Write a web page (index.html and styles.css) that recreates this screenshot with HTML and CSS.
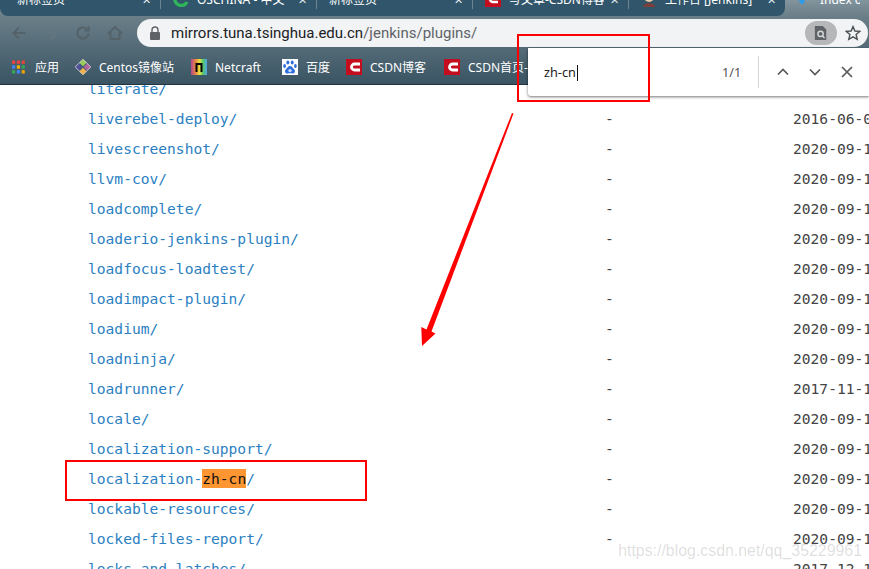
FILE: index.html
```html
<!DOCTYPE html>
<html lang="en">

<head>
    <meta charset="UTF-8">
    <title>Index of /jenkins/plugins/</title>
    <link rel="stylesheet" href="styles.css">
</head>

<body>
    <div id="page">
        <header id="chrome">
            <div id="tabs">
                <div id="tabsOff">
                    <div class="tab"><span class="tabTitle">新标签页</span><span class="tabClose">✕</span></div>
                    <div class="tab">
                        <svg class="tabIcon" viewBox="0 0 16 16"><path d="M14 5 A6.5 6.5 0 1 0 14 11" fill="none" stroke="#2fb45a" stroke-width="3.4"/></svg>
                        <span class="tabTitle">OSCHINA - 中文</span><span class="tabClose">✕</span>
                    </div>
                    <div class="tab"><span class="tabTitle">新标签页</span><span class="tabClose">✕</span></div>
                    <div class="tab">
                        <svg class="tabIcon" viewBox="0 0 16 16"><rect width="16" height="16" fill="#c40d1e"/><path d="M13 5 H8 A3 3 0 0 0 8 11 H13" fill="none" stroke="#fff" stroke-width="2.6"/></svg>
                        <span class="tabTitle">写文章-CSDN博客</span><span class="tabClose">✕</span>
                    </div>
                    <div class="tab lastOff">
                        <svg class="tabIcon" viewBox="0 0 16 16"><circle cx="8" cy="6" r="5" fill="#e8c9a8"/><path d="M2 16 C2 11 14 11 14 16 Z" fill="#7c3f3a"/><rect x="4" y="2" width="8" height="2" fill="#5a4a44"/></svg>
                        <span class="tabTitle">工作台 [Jenkins]</span><span class="tabClose">✕</span>
                    </div>
                </div>
                <div class="tab activeTab">
                    <svg class="tabIcon" viewBox="0 0 16 16"><path d="M8 14 L5 10 L8 4 L11 10 Z" fill="#2d9be8"/></svg>
                    <span class="tabTitle">Index of</span>
                </div>
            </div>

            <div id="toolbar">
                <div id="navBtns">
                    <svg viewBox="0 0 16 16"><path d="M14.5 8 H2.5 M8 2.5 L2.5 8 L8 13.5" /></svg>
                    <svg class="navOff" viewBox="0 0 16 16"><path d="M1.5 8 H13.5 M8 2.5 L13.5 8 L8 13.5" /></svg>
                    <svg viewBox="0 0 16 16"><path d="M13.5 8 A5.6 5.6 0 1 1 11.8 4 M13.6 1.5 V5.4 H9.7" /></svg>
                    <svg viewBox="0 0 16 16"><path d="M1 8.5 L8 2 L15 8.5 M3.5 7 V14 H12.5 V7" /></svg>
                </div>
                <div id="omnibox">
                    <svg id="lock" viewBox="0 0 12 14"><path d="M3 6 V4 A3 3 0 0 1 9 4 V6" fill="none" stroke="#5f6368" stroke-width="1.4"/><rect x="1" y="6" width="10" height="8" rx="1" fill="#5f6368"/></svg>
                    <span id="url"><b>mirrors.tuna.tsinghua.edu.cn</b>/jenkins/plugins/</span>
                    <span id="lens">
                        <svg viewBox="0 0 16 18"><path d="M1 1 H10 L14 5 V17 H1 Z" fill="#5f6368"/><circle cx="7.5" cy="10" r="3" fill="none" stroke="#d8d9da" stroke-width="1.6"/><path d="M9.6 12.2 L12 14.6" stroke="#d8d9da" stroke-width="1.6"/></svg>
                    </span>
                    <svg id="star" viewBox="0 0 16 16"><path d="M8 1.6 L9.9 6 L14.7 6.4 L11.1 9.6 L12.2 14.3 L8 11.8 L3.8 14.3 L4.9 9.6 L1.3 6.4 L6.1 6 Z" fill="none" stroke="#4a4f53" stroke-width="1.4"/></svg>
                </div>
            </div>

            <div id="bookmarks">
                <div class="mark markApps">
                    <svg class="markIcon" viewBox="0 0 14 14">
                        <rect x="0" y="0" width="3.4" height="3.6" fill="#e8453c"/><rect x="5.2" y="0" width="3.4" height="3.6" fill="#e8453c"/><rect x="10.4" y="0" width="3.4" height="3.6" fill="#e8453c"/>
                        <rect x="0" y="5.2" width="3.4" height="3.6" fill="#4285f4"/><rect x="5.2" y="5.2" width="3.4" height="3.6" fill="#f4b400"/><rect x="10.4" y="5.2" width="3.4" height="3.6" fill="#34a853"/>
                        <rect x="0" y="10.4" width="3.4" height="3.6" fill="#34a853"/><rect x="5.2" y="10.4" width="3.4" height="3.6" fill="#4285f4"/><rect x="10.4" y="10.4" width="3.4" height="3.6" fill="#f4a400"/>
                    </svg>
                    <span>应用</span>
                </div>
                <div class="mark markCentos">
                    <svg class="markIcon" viewBox="0 0 16 16">
                        <g transform="rotate(45 8 8)">
                            <rect x="2.5" y="2.5" width="5" height="5" fill="#9ccd5a"/><rect x="8.5" y="2.5" width="5" height="5" fill="#b4679f"/>
                            <rect x="2.5" y="8.5" width="5" height="5" fill="#4f4f99"/><rect x="8.5" y="8.5" width="5" height="5" fill="#f2b14d"/>
                            <rect x="2.5" y="2.5" width="11" height="11" fill="none" stroke="#d8d8d8" stroke-width=".8"/>
                        </g>
                    </svg>
                    <span>Centos镜像站</span>
                </div>
                <div class="mark markNetcraft">
                    <svg class="markIcon" viewBox="0 0 16 16">
                        <defs>
                            <linearGradient id="rainbow" x1="0" y1="0" x2="1" y2="0">
                                <stop offset="0" stop-color="#b8478f"/><stop offset=".3" stop-color="#e8893a"/><stop offset=".55" stop-color="#e7e343"/><stop offset=".75" stop-color="#55c76a"/><stop offset="1" stop-color="#4aa6e8"/>
                            </linearGradient>
                        </defs>
                        <rect width="16" height="16" fill="url(#rainbow)"/>
                        <path d="M4.5 13 V4 H11.5 V13 H9.5 V6 H6.5 V13 Z" fill="#000"/>
                    </svg>
                    <span>Netcraft</span>
                </div>
                <div class="mark markBaidu">
                    <svg class="markIcon" viewBox="0 0 16 16">
                        <rect width="16" height="16" fill="#fff"/>
                        <g fill="#2f6fdc">
                            <ellipse cx="5.8" cy="3.6" rx="1.5" ry="2"/><ellipse cx="10.2" cy="3.6" rx="1.5" ry="2"/>
                            <ellipse cx="2.6" cy="7" rx="1.4" ry="1.9"/><ellipse cx="13.4" cy="7" rx="1.4" ry="1.9"/>
                            <path d="M8 7 C5.8 7 5.4 9 3.8 10.4 C2.2 12 3.2 14.6 5.6 14.4 C7 14.3 9 14.3 10.4 14.4 C12.8 14.6 13.8 12 12.2 10.4 C10.6 9 10.2 7 8 7 Z"/>
                        </g>
                        <circle cx="8" cy="11.6" r="1.7" fill="#cfe0fa"/>
                    </svg>
                    <span>百度</span>
                </div>
                <div class="mark markCsdn">
                    <svg class="markIcon" viewBox="0 0 16 16"><rect width="16" height="16" fill="#c40d1e"/><path d="M14 5 H8.5 A3 3 0 0 0 8.5 11 H14" fill="none" stroke="#fff" stroke-width="2.8"/></svg>
                    <span>CSDN博客</span>
                </div>
                <div class="mark">
                    <svg class="markIcon" viewBox="0 0 16 16"><rect width="16" height="16" fill="#c40d1e"/><path d="M14 5 H8.5 A3 3 0 0 0 8.5 11 H14" fill="none" stroke="#fff" stroke-width="2.8"/></svg>
                    <span>CSDN首页-</span>
                </div>
            </div>
        </header>

        <main id="listing">
            <div class="row"><a>literate/</a><span>-</span><span>2016-06-08 01:12</span></div>
            <div class="row"><a>liverebel-deploy/</a><span>-</span><span>2016-06-08 01:12</span></div>
            <div class="row"><a>livescreenshot/</a><span>-</span><span>2020-09-14 05:20</span></div>
            <div class="row"><a>llvm-cov/</a><span>-</span><span>2020-09-14 05:20</span></div>
            <div class="row"><a>loadcomplete/</a><span>-</span><span>2020-09-14 05:20</span></div>
            <div class="row"><a>loaderio-jenkins-plugin/</a><span>-</span><span>2020-09-14 05:20</span></div>
            <div class="row"><a>loadfocus-loadtest/</a><span>-</span><span>2020-09-14 05:20</span></div>
            <div class="row"><a>loadimpact-plugin/</a><span>-</span><span>2020-09-14 05:20</span></div>
            <div class="row"><a>loadium/</a><span>-</span><span>2020-09-14 05:20</span></div>
            <div class="row"><a>loadninja/</a><span>-</span><span>2020-09-14 05:20</span></div>
            <div class="row"><a>loadrunner/</a><span>-</span><span>2017-11-14 05:20</span></div>
            <div class="row"><a>locale/</a><span>-</span><span>2020-09-14 05:20</span></div>
            <div class="row"><a>localization-support/</a><span>-</span><span>2020-09-14 05:20</span></div>
            <div class="row"><a>localization-<mark class="hit">zh-cn</mark>/</a><span>-</span><span>2020-09-14 05:20</span></div>
            <div class="row"><a>lockable-resources/</a><span>-</span><span>2020-09-14 05:20</span></div>
            <div class="row"><a>locked-files-report/</a><span>-</span><span>2020-09-14 05:20</span></div>
            <div class="row"><a>locks-and-latches/</a><span>-</span><span>2017-12-14 05:20</span></div>
        </main>

        <!-- find bar and the annotations drawn on top of the shot -->
        <div id="findBar">
            <span id="findText">zh-cn</span>
            <span id="findCount">1/1</span>
            <span id="findSep"></span>
            <svg class="findBtn" viewBox="0 0 14 14"><path d="M2 9.5 L7 4.5 L12 9.5"/></svg>
            <svg class="findBtn" viewBox="0 0 14 14"><path d="M2 4.5 L7 9.5 L12 4.5"/></svg>
            <svg class="findBtn" viewBox="0 0 14 14"><path d="M2 2 L12 12 M12 2 L2 12"/></svg>
        </div>
        <div class="redBox" id="boxFind"></div>
        <div class="redBox" id="boxRow"></div>
        <svg id="arrow" viewBox="0 0 869 569"><polygon points="512,113 513.5,113.6 431.5,331.5 435.5,333.5 422,346 421.3,327 426.5,329.5"/></svg>
        <div id="watermark">https://blog.csdn.net/qq_35229961</div>
    </div>
</body>

</html>
```

FILE: styles.css
```css
html, body {
    margin: 0;
    padding: 0;
    background-color: white;
}

#page {
    position: relative;
    width: 869px;
    height: 569px;
    overflow: hidden;
}

#chrome {
    position: relative;
    z-index: 1;
    height: 84px;
    background: linear-gradient(#82949c, #6a7e88 20%, #3a5463);
    border-bottom: 1px solid #22343e;
    font-family: "Noto Sans", "Noto Sans CJK SC", sans-serif;
    color: white;
}

/* tabs are cut off at the top of the shot */
#tabs {
    display: flex;
    height: 16px;
}

#tabsOff {
    display: flex;
    align-items: flex-start;
    height: 16px;
    padding-left: 5px;
    background-color: #31566b;
    border-radius: 0 0 8px 8px;
}

.tab {
    flex: none;
    display: flex;
    align-items: center;
    box-sizing: border-box;
    width: 156px;
    height: 19px;
    margin-top: -10px;
    padding: 0 9px 0 12px;
    font-size: 12px;
    line-height: 12px;
    border-right: 1px solid #6d8492;
    overflow: hidden;
}

.tab.lastOff {
    border-right: none;
}

.activeTab {
    padding-left: 9px;
    border-right: none;
    width: 84px;
}

.tabIcon {
    flex: none;
    width: 16px;
    height: 16px;
    margin: 0 8px 2px 0;
}

.activeTab .tabIcon {
    margin-right: 10px;
}

.tabTitle {
    flex: 1;
    white-space: nowrap;
    overflow: hidden;
}

.tabClose {
    flex: none;
    margin-left: 6px;
    font-size: 11px;
    color: #e6ecef;
}

#toolbar {
    display: flex;
    align-items: center;
    height: 34px;
}

#navBtns {
    flex: none;
    display: flex;
    gap: 16px;
    width: 137px;
    box-sizing: border-box;
    padding-left: 11px;
}

#navBtns svg {
    width: 16px;
    height: 16px;
    fill: none;
    stroke: #556269;
    stroke-width: 2;
}

#navBtns .navOff {
    stroke: #627680;
}

#omnibox {
    display: flex;
    align-items: center;
    width: 731px;
    height: 28px;
    border-radius: 14px;
    background-color: #f1f3f4;
}

#lock {
    flex: none;
    width: 12px;
    height: 14px;
    margin-left: 12px;
}

#url {
    flex: 1;
    margin-left: 10px;
    font-family: Roboto, sans-serif;
    font-size: 15px;
    color: #5f6368;
    white-space: nowrap;
}

#url b {
    font-weight: normal;
    color: #202124;
}

#lens {
    flex: none;
    display: flex;
    align-items: center;
    justify-content: center;
    width: 32px;
    height: 24px;
    border-radius: 12px;
    background-color: #b5b7b8;
}

#lens svg {
    width: 14px;
    height: 16px;
}

#star {
    flex: none;
    width: 16px;
    height: 16px;
    margin: 0 7px 0 8px;
}

#bookmarks {
    display: flex;
    align-items: center;
    height: 34px;
    padding-left: 12px;
    font-size: 12px;
    white-space: nowrap;
}

.mark {
    flex: none;
    display: flex;
    align-items: center;
}

.markApps { width: 63px; }
.markCentos { width: 116px; }
.markNetcraft { width: 91px; }
.markBaidu { width: 64px; }
.markCsdn { width: 98px; }

.markIcon {
    flex: none;
    width: 16px;
    height: 16px;
    margin-right: 8px;
}

.markApps .markIcon {
    width: 13px;
    height: 14px;
    margin-right: 10px;
}

#listing {
    margin-top: -12px;
    font-family: "DejaVu Sans Mono", monospace;
    font-size: 14.6px;
    color: #444;
}

.row {
    display: grid;
    grid-template-columns: 517px 188px 1fr;
    align-items: center;
    height: 30px;
    padding-left: 88px;
    white-space: nowrap;
}

.row a {
    color: #2b7fc2;
}

.hit {
    background-color: #ff9632;
    color: #111;
    padding: 1px 0;
}

#findBar {
    position: absolute;
    z-index: 2;
    left: 528px;
    top: 48px;
    width: 341px;
    height: 48px;
    display: flex;
    align-items: center;
    box-sizing: border-box;
    padding-left: 16px;
    background-color: white;
    border-radius: 0 0 0 3px;
    box-shadow: 0 1px 3px rgba(0, 0, 0, .55);
    font-family: "Noto Sans", sans-serif;
    font-size: 12.7px;
    color: #222;
}

#findText {
    flex: none;
    width: 178px;
}

#findText::after {
    content: "";
    display: inline-block;
    width: 1px;
    height: 16px;
    margin-left: 1px;
    vertical-align: -4px;
    background-color: #111;
}

#findCount {
    flex: none;
    width: 36px;
    color: #555;
}

#findSep {
    flex: none;
    width: 1px;
    height: 32px;
    margin-right: 17px;
    background-color: #d4d6d8;
}

.findBtn {
    flex: none;
    width: 14px;
    height: 14px;
    margin-right: 18px;
    fill: none;
    stroke: #55595c;
    stroke-width: 1.7;
}

.redBox {
    position: absolute;
    z-index: 3;
    box-sizing: border-box;
    border: 2px solid #f00;
}

#boxFind {
    left: 517px;
    top: 34px;
    width: 133px;
    height: 68px;
}

#boxRow {
    left: 65px;
    top: 460px;
    width: 302px;
    height: 41px;
}

#arrow {
    position: absolute;
    z-index: 3;
    left: 0;
    top: 0;
    width: 869px;
    height: 569px;
    fill: #f00;
}

#watermark {
    position: absolute;
    z-index: 3;
    right: 7px;
    top: 542px;
    font-family: "Liberation Sans", sans-serif;
    font-size: 15.9px;
    color: rgba(0, 0, 0, .14);
    white-space: nowrap;
}
```
